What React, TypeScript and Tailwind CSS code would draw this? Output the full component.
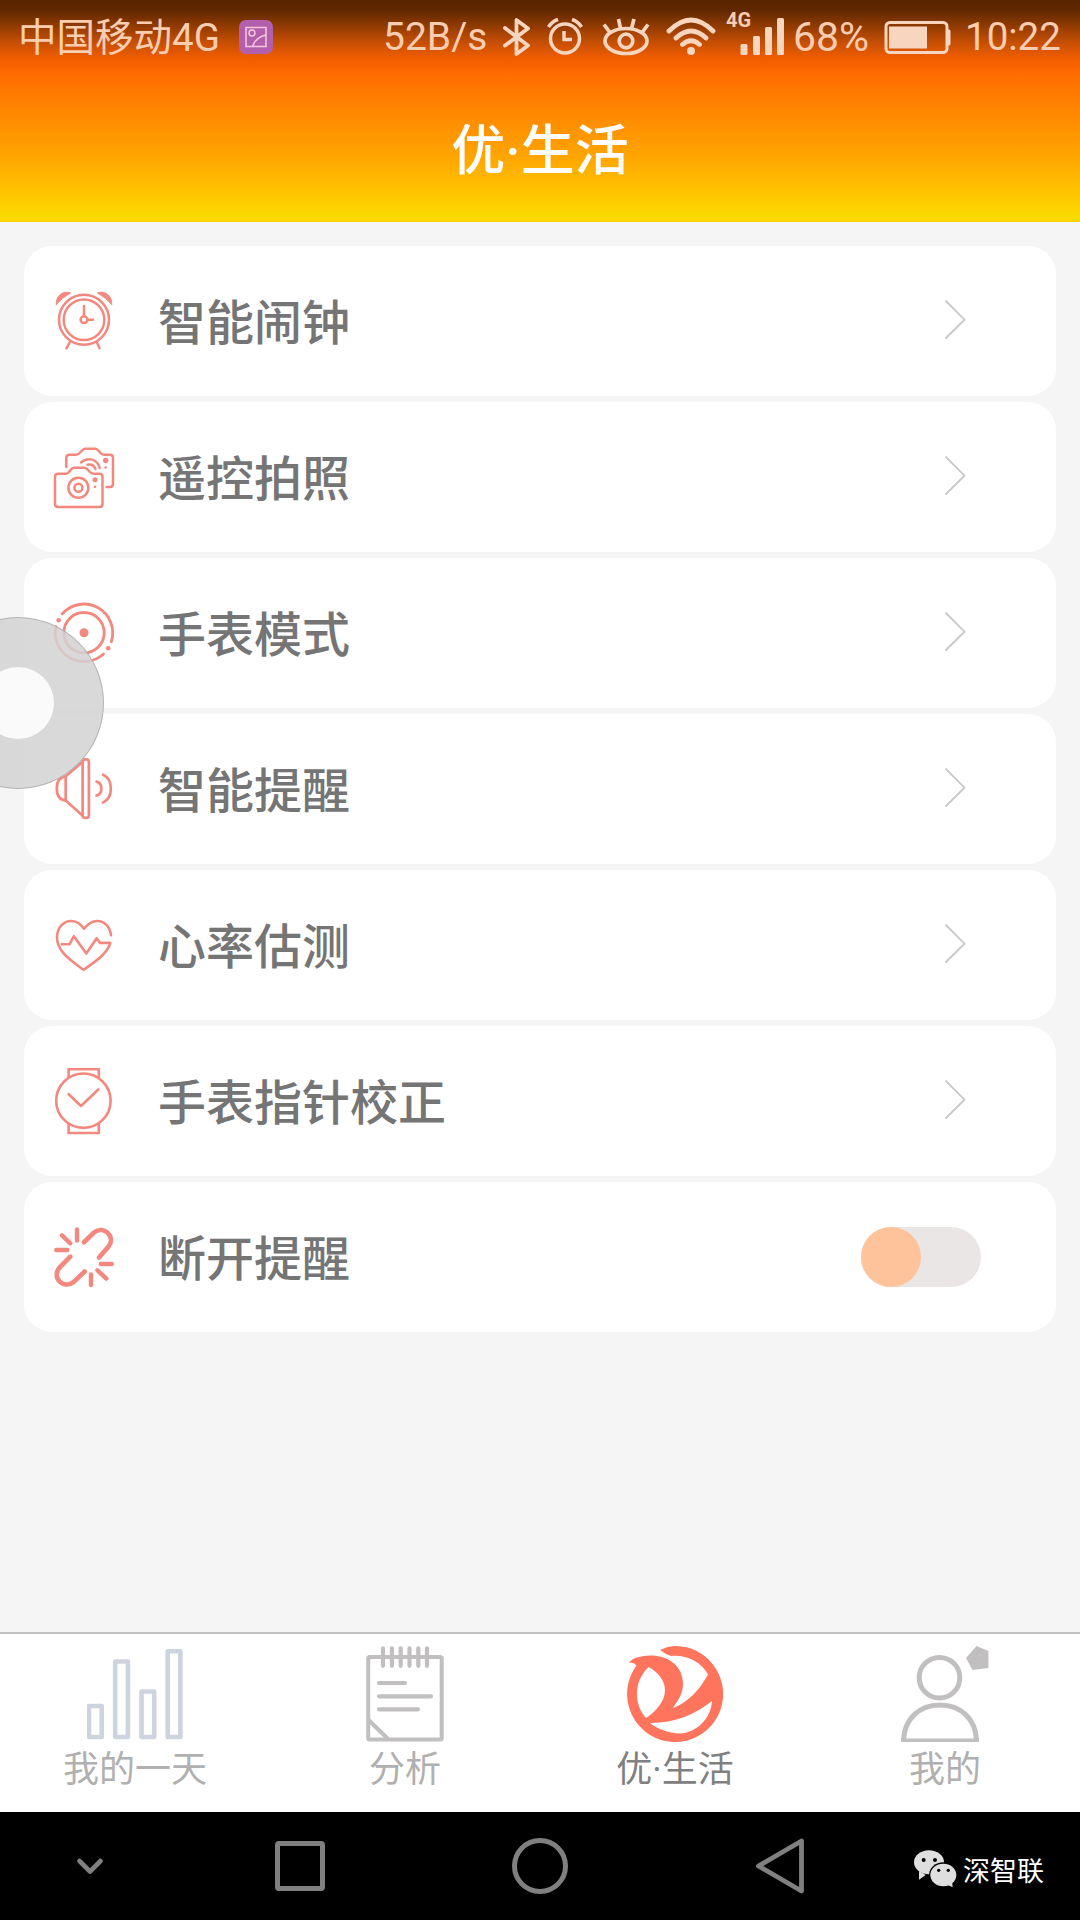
import type { ReactNode } from "react";

const STATUS = "#f8d5bf";
const CORAL = "#f3897e";

function RowIcon({ children, width = 2.7 }: { children: ReactNode; width?: number }) {
  return (
    <svg
      viewBox="0 0 72 72"
      className="size-[72px] shrink-0"
      fill="none"
      stroke={CORAL}
      strokeWidth={width}
      strokeLinecap="round"
      strokeLinejoin="round"
    >
      {children}
    </svg>
  );
}

const AlarmIcon = () => (
  <RowIcon width={2.5}>
    <circle cx="36" cy="34.7" r="25" />
    <circle cx="36" cy="34.7" r="20.3" />
    <circle cx="36" cy="34.7" r="3.4" />
    <path d="M36 21v10M39.6 34.7H45" />
    <path d="M8.3 19.500C7.500 11 15 5 22.6 8Q14 12.500 8.3 19.500ZM63.700 19.500C64.500 11 57 5 49.400 8Q58 12.500 63.700 19.500Z" fill={CORAL} strokeWidth="1" />
    <path d="M22 57l-3.500 6.300M48.700 57l2.900 6.300" />
  </RowIcon>
);

const CameraIcon = () => (
  <RowIcon width={2.5}>
    <path d="M10 32.700h8c3.500 0 4-5.500 8-5.900h10.500c4 .4 5 5.900 8.500 5.900h6.500q3 0 3 3v27.200q0 3-3 3H10q-3 0-3-3V35.700q0-3 3-3Z" />
    <circle cx="30.400" cy="46.700" r="10" />
    <circle cx="30.400" cy="46.700" r="4" />
    <circle cx="47" cy="38.700" r="2.500" fill={CORAL} stroke="none" />
    <circle cx="47" cy="45.700" r="1.300" fill={CORAL} stroke="none" />
    <path d="M18.300 26v-9q0-3.300 3.300-3.300H28c4.500 0 5-5.500 9-5.900h10.500c4 .4 4 5.900 8.500 5.900h6q3 0 3 3V43q0 3-3 3h-3.500" />
    <path d="M33 21.500C39.500 15.500 49.500 18 51.700 27M39.500 23.800c3.500-1 6.500.6 8 4.200" />
    <circle cx="57.700" cy="19.500" r="2.700" fill={CORAL} stroke="none" />
    <circle cx="57.700" cy="26.500" r="1.300" fill={CORAL} stroke="none" />
  </RowIcon>
);

const DialIcon = () => (
  <RowIcon width={2.900}>
    <circle cx="36" cy="35.700" r="20.200" />
    <circle cx="36" cy="35.700" r="4.500" fill={CORAL} stroke="none" />
    <path d="M14.300 16.800A28.800 28.800 0 0 1 63.300 44.700M55.500 57A28.800 28.800 0 0 1 7.900 29.700" />
    <circle cx="60.200" cy="51.200" r="2.300" fill={CORAL} stroke="none" />
    <circle cx="10.700" cy="23.300" r="2.300" fill={CORAL} stroke="none" />
  </RowIcon>
);

const SpeakerIcon = () => (
  <RowIcon>
    <rect x="34.600" y="6.300" width="6.300" height="58.500" rx="2.600" />
    <path d="M34.500 9L17.700 23.300C11.500 24 8.800 29 8.800 35.400s2.700 11.500 8.900 12.200L34.500 62.500M17.700 23.300v24.300" />
    <path d="M48.500 28.600c6.500 1.600 6.500 12.400 0 14M55 21.700c10.500 4.500 10.500 23.200 0 27.700" />
  </RowIcon>
);

const HeartIcon = () => (
  <RowIcon width={2.600}>
    <path d="M63 26.300C62 17.500 56.500 12 49 12c-6 0-9.500 3.500-13 7.700C32.500 15.500 29.500 12 23.500 12 15 12 9 19 9 28.500 9 43 24 52 35.500 60.800 46 53.500 59 45.500 62.300 33.900H52l-3.300-4.700L38.300 44.500 25.900 27.200l-4.400 8.100h-7.800" />
  </RowIcon>
);

const WatchIcon = () => (
  <RowIcon width={2.600}>
    <circle cx="35.400" cy="35.700" r="27.200" />
    <path d="M20.600 12.700V4.200h30.200v8.500M20.600 58.700V68h30.200v-9.300" strokeLinecap="butt" strokeLinejoin="miter" />
    <path d="M20.700 29.200L33 41l17.300-16.500" />
  </RowIcon>
);

const BrokenLinkIcon = () => (
  <RowIcon width={4.700}>
    <path d="M36 21.300l10-9.800c4.500-3.500 10-3.200 13.700.3 4 4 4.200 9.500.8 13.800L51 36.500" />
    <path d="M22.200 35.700L11.500 46.600c-3.800 4.700-3.500 10.200 0 13.700 4 4 9.700 4 14 .8L36.700 50.500" />
    <path d="M29 8.500v11M14 14.300l8.300 8M8.300 29h11M52.800 43h11M49.500 49.300l8.800 8.300M43 53.500V64" strokeWidth="4.400" />
  </RowIcon>
);

const rows = [
  { label: "智能闹钟", icon: <AlarmIcon /> },
  { label: "遥控拍照", icon: <CameraIcon /> },
  { label: "手表模式", icon: <DialIcon /> },
  { label: "智能提醒", icon: <SpeakerIcon /> },
  { label: "心率估测", icon: <HeartIcon /> },
  { label: "手表指针校正", icon: <WatchIcon /> },
  { label: "断开提醒", icon: <BrokenLinkIcon />, toggle: true },
];

function StatusBar() {
  return (
    <div className="flex h-[74px] items-center pl-[18px] text-[38.500px] leading-none text-[#f8cdb2]">
      <span className="w-[221px] shrink-0 whitespace-nowrap pt-[3px]">中国移动4G</span>
      <svg viewBox="0 0 34 34" className="size-[34px] shrink-0" fill="none" stroke="#f8c8d8" strokeWidth="1.500">
        <rect width="34" height="34" rx="7" fill="#b25fae" stroke="none" />
        <rect x="7" y="7.500" width="20" height="19" />
        <circle cx="13" cy="13" r="3" />
        <path d="M13.500 26.500Q17 17 27 15" />
      </svg>
      <span className="ml-[110px] w-[120px] shrink-0 whitespace-nowrap pt-px text-[39px]">52B/s</span>
      <svg viewBox="0 0 28 40" className="h-10 w-7 shrink-0" fill="none" stroke={STATUS} strokeWidth="3.800" strokeLinecap="round" strokeLinejoin="round">
        <path d="M2 11l23 17.500-11.500 8.500V3L25 11.500 2 28.500" />
      </svg>
      <svg viewBox="0 0 38 40" className="ml-[15px] h-10 w-[38px] shrink-0" fill="none" stroke={STATUS} strokeWidth="3.500">
        <circle cx="19" cy="21.500" r="14.500" />
        <path d="M18 14V22.500h8M2.500 10Q6 4.500 12 2.500M35.500 10Q32 4.500 26 2.500" />
      </svg>
      <svg viewBox="0 0 48 40" className="ml-[18px] h-10 w-12 shrink-0" fill="none" stroke={STATUS} strokeWidth="3.700">
        <ellipse cx="24" cy="24" rx="21" ry="12.500" />
        <circle cx="24" cy="24" r="6.800" />
        <path d="M7.500 15L2 7.500M18.500 11.500L16.500 2M29.500 11.500L32 2M40.500 15L46 7.500" />
      </svg>
      <svg viewBox="0 0 52 40" className="ml-[15px] h-10 w-[52px] shrink-0" fill="none" stroke={STATUS} strokeWidth="4.800" strokeLinecap="round">
        <path d="M4 14Q26-8 48 14M11 21Q26 7 41 21M17.500 27.500Q26 20 34.500 27.500" />
        <circle cx="26" cy="34" r="4" fill={STATUS} stroke="none" />
      </svg>
      <div className="relative ml-[8px] h-10 w-[60px] shrink-0">
        <span className="absolute left-px top-[-7px] text-[20px] font-bold leading-none">4G</span>
        <svg viewBox="0 0 60 40" className="h-10 w-[60px]" fill={STATUS}>
          <rect x="15.500" y="27" width="7" height="11" rx="1.500" />
          <rect x="28" y="19" width="7" height="19" rx="1.500" />
          <rect x="40" y="10" width="7" height="28" rx="1.500" />
          <rect x="52" y="1" width="7" height="37" rx="1.500" />
        </svg>
      </div>
      <span className="ml-[8px] w-[91px] shrink-0 whitespace-nowrap pt-px text-[41px]">68%</span>
      <svg viewBox="0 0 68 36" className="h-9 w-[68px] shrink-0" fill="none" stroke={STATUS} strokeWidth="3">
        <rect x="2" y="3.500" width="61" height="30" rx="4" />
        <rect x="5" y="7.500" width="38" height="22" fill={STATUS} stroke="none" />
        <path d="M63.500 10.500H65q1.500 0 1.500 1.500v13q0 1.500-1.500 1.500h-1.500Z" fill={STATUS} stroke="none" />
      </svg>
      <span className="ml-[13px] whitespace-nowrap pt-px">10:22</span>
    </div>
  );
}

const tabs = [
  {
    label: "我的一天",
    icon: (
      <svg viewBox="0 0 96 96" className="size-24" fill="none" stroke="#cdd3df" strokeWidth="4.600" strokeLinejoin="round">
        <rect x="2" y="60" width="12.700" height="31" />
        <rect x="28.200" y="15.500" width="12.700" height="75.500" />
        <rect x="54.500" y="45.500" width="12.700" height="45.500" />
        <rect x="80.700" y="5.200" width="12.700" height="85.800" />
      </svg>
    ),
  },
  {
    label: "分析",
    icon: (
      <svg viewBox="0 0 96 96" className="size-24" fill="none" stroke="#c1bfbf" strokeWidth="4.200" strokeLinecap="round">
        <rect x="11.200" y="11" width="73.500" height="82.500" rx="1.500" strokeWidth="4" />
        <path d="M26 2.300v17.500M34.900 2.300v17.500M43.700 2.300v17.500M52.500 2.300v17.500M61.300 2.300v17.500M70 2.300v17.500" />
        <path d="M22 37h26M22 50.300h52M22 63.300h39M11.500 74l18.500 18" />
      </svg>
    ),
  },
  {
    label: "优·生活",
    active: true,
    icon: (
      <svg viewBox="0 0 96 96" className="size-24" fill="#ff745c">
        <path
          fillRule="evenodd"
          d="M33 4C40 .8 45 0 49 0A48 48 0 1 1 9.500 19.500Q7 16 2 17Q5 12.500 10 11.500C31 5 56 14 56 38C56 48 51 54 46 62C62 56 73 43 81 28.500C74 15.500 59 8.500 44 10Q38 8 33 4ZM21.500 21C6 36 7 59 19 72C31 64 38 54 38 44C38 34 30 25 21.500 21ZM23 77C49 77 68 68 85 55C84 73 69 87 53 87.500C41 87 30 83 23 77Z"
        />
      </svg>
    ),
  },
  {
    label: "我的",
    icon: (
      <svg viewBox="0 0 96 96" className="size-24" fill="none" stroke="#c1bfbf" strokeWidth="5">
        <circle cx="42.500" cy="31.700" r="20.300" />
        <path d="M6.500 94C7.500 73 22 59 43 59S78.500 73 79.500 94" />
        <path d="M4 94.300h78" strokeWidth="3.400" />
        <path d="M79.500 0L91.500 5v17L75.500 24 69 12Z" fill="#c1bfbf" stroke="none" />
      </svg>
    ),
  },
];

export default function App() {
  return (
    <div className="relative flex h-[1920px] w-[1080px] flex-col overflow-hidden bg-[#f5f5f5] font-[Roboto,'Noto_Sans_CJK_SC',sans-serif]">
      <header className="h-[222px] bg-[linear-gradient(180deg,#582400_0px,#602800_10px,#8a3800_24px,#c44e04_42px,#f05d00_58px,#f96200_66px,#ff6c00_74px,#ff8600_110px,#ffa400_155px,#ffc200_190px,#ffd400_211px,#f8da00_215px,#ffd500_222px)]">
        <StatusBar />
        <h1 className="flex h-[148px] items-center justify-center pt-[7px] text-[54px] font-medium leading-none text-white">优·生活</h1>
      </header>

      <main className="flex flex-1 flex-col gap-1.5 px-6 pt-6">
        {rows.map((row) => (
          <div key={row.label} className="flex h-[150px] items-center rounded-[28px] bg-white pl-6">
            {row.icon}
            <span className="ml-[38px] flex-1 pt-1.5 text-[48px] font-medium leading-none text-[#757575]">{row.label}</span>
            {row.toggle ? (
              <div className="mr-[75px] h-[60px] w-[120px] rounded-full bg-[#eae6e6]">
                <div className="size-[60px] rounded-full bg-[#ffc39b]" />
              </div>
            ) : (
              <svg viewBox="0 0 24 42" className="mr-[89px] h-[42px] w-6" fill="none" stroke="#c8c8c8" strokeWidth="1.800">
                <path d="M2.500 0.500L21.500 19.700L2.500 38.500" />
              </svg>
            )}
          </div>
        ))}
      </main>

      <div className="absolute left-[-68px] top-[617px] flex size-[172px] items-center justify-center rounded-full border border-[#aaaaaa]/80 bg-[#d2d2d2]/85">
        <div className="size-[72px] rounded-full bg-[#fafafa]" />
      </div>

      <nav className="grid h-[180px] grid-cols-4 border-t-2 border-[#c0c0c0] bg-white pt-3">
        {tabs.map((tab) => (
          <div key={tab.label} className="flex flex-col items-center">
            {tab.icon}
            <span className={tab.active ? "mt-2.5 text-[36px] leading-none text-[#808080]" : "mt-2.5 text-[36px] leading-none text-[#b0b0b0]"}>
              {tab.label}
            </span>
          </div>
        ))}
      </nav>

      <footer className="flex h-[108px] items-center bg-black">
        <div className="flex w-[180px] justify-center">
          <svg viewBox="0 0 30 20" className="h-5 w-[30px]" fill="none" stroke="#808080" strokeWidth="4.600" strokeLinecap="round" strokeLinejoin="round">
            <path d="M4.500 5L15 15.500 25.500 5" />
          </svg>
        </div>
        <div className="flex w-[240px] justify-center">
          <div className="size-[50px] rounded-[4px] border-[5px] border-[#808080]" />
        </div>
        <div className="flex w-[240px] justify-center">
          <div className="size-14 rounded-full border-[5px] border-[#808080]" />
        </div>
        <div className="flex w-[240px] justify-center">
          <svg viewBox="0 0 50 56" className="h-14 w-[50px]" fill="none" stroke="#808080" strokeWidth="4.800" strokeLinejoin="round">
            <path d="M3.500 28L46.500 3v50Z" />
          </svg>
        </div>
        <div className="flex w-[180px] items-center pl-3.5 pt-1.5">
          <svg viewBox="42 30 129 114" className="h-[38px] w-[43px] shrink-0" fill="#dedede">
            <path d="M57 92v27l20-14Z" />
            <ellipse cx="87" cy="67" rx="45" ry="36" />
            <circle cx="71" cy="60" r="6" fill="black" />
            <circle cx="105" cy="60" r="6" fill="black" />
            <ellipse cx="130" cy="105" rx="43" ry="38" fill="black" />
            <path d="M142 134l16 8-2-18Z" />
            <ellipse cx="130" cy="105" rx="39" ry="34" />
            <circle cx="116" cy="91" r="5" fill="black" />
            <circle cx="145" cy="91" r="5" fill="black" />
          </svg>
          <span className="ml-1.5 whitespace-nowrap pt-1.5 text-[27px] leading-none text-white">深智联</span>
        </div>
      </footer>
    </div>
  );
}
